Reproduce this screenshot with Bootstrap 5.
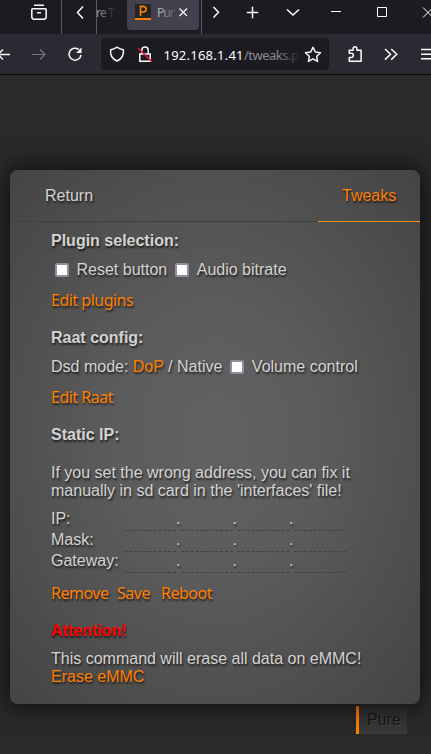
<!DOCTYPE html>
<html lang="en">
<head>
<meta charset="utf-8">
<title>Pure Tweaks</title>
<link rel="stylesheet" href="https://cdn.jsdelivr.net/npm/bootstrap@5.3.0/dist/css/bootstrap.min.css">
<style>
body{background:#2a2a2a;font-family:"Liberation Sans",sans-serif;font-size:16px;line-height:18px;color:#d3d3d3;width:431px;height:754px}
svg{display:block;fill:none;stroke:#fbfbfe;stroke-width:1.5}
.tabstrip{height:34px;background:#1c1b22}
.toolbar{height:41px;background:#2b2a33;border-bottom:1px solid #0c0c0d}
.chrome{font-family:"Noto Sans",sans-serif;font-size:12px;color:#b8b7bd}
.bar-svg{width:431px}
.chrome text{stroke:none;fill:#fbfbfe;font-family:"Noto Sans",sans-serif}
.panel{margin:95px 11px 0 10px;height:534px;border-radius:8px;background:radial-gradient(ellipse farthest-corner at center,#626262 0%,#5c5c5c 35%,#444 100%);box-shadow:0 0 24px 4px rgba(0,0,0,.62);text-shadow:1px 2px 2px rgba(0,0,0,.65);position:relative}
.tabs-row{height:52px}
.tab-return{width:308px;padding:17px 0 0 35px;border-bottom:1px solid #404040}
.tab-tweaks{width:102px;padding:17px 0 0 24px;color:#ff7f00;border-bottom:1px solid #ff9210}
.content{padding:10px 0 0 41px;white-space:nowrap}
.content b{display:block}
.act{font-family:"Noto Sans",sans-serif;font-size:16px;letter-spacing:-.5px;color:#ff7f00}
.or{color:#ff7f00}
.chk{width:14px;height:14px;border:2px solid #8f8f9d;border-radius:2px;background:#fff}
.chk+span{margin-left:7.5px}
.g11{margin-top:11px}.g12{margin-top:12px}.g13{margin-top:13px}.g20{margin-top:20px}.g10{margin-top:10px}.g8{margin-top:8px}
.iprow{height:21px;line-height:21px}
.iplabel{width:73px}
.octet{width:52px;height:21px;border-bottom:1px dashed #404040;transform:translateY(2px)}
.dot{width:4.5px}
.w-remove{width:66px}.w-save{width:44px}
.alert-title{color:red}
.pure{width:51px;height:28px;margin:2px 0 0 356px;border-left:3px solid #ff7f00;color:#151515;padding:5px 0 0 8px;text-shadow:1px 1px 0 #484848;background:linear-gradient(#303030,#3a3a3a)}
</style>
<script src="https://cdn.jsdelivr.net/npm/bootstrap@5.3.0/dist/js/bootstrap.bundle.min.js"></script>
</head>
<body class="m-0 overflow-hidden">
<header class="chrome">
<div class="tabstrip">
<svg class="bar-svg" height="34" viewBox="0 0 431 34">
<defs><linearGradient id="f1"><stop offset="0" stop-color="#a5a4aa"/><stop offset="1" stop-color="#222129"/></linearGradient><linearGradient id="f2"><stop offset="0" stop-color="#bebdc5"/><stop offset="1" stop-color="#55535f"/></linearGradient></defs>
<path d="M61.5 0V34M96.5 0V34M201.5 0V34" stroke="#5b5a61" stroke-width="1"/>
<path d="M34 5.3h10M32.3 8.7h13.4M31.8 9.5v7.3q0 2.4 2.4 2.4h9.6q2.4 0 2.4-2.4V9.5q0-.8-1-.8H32.8q-1 0-1 .8M37 12.7h4"/>
<path d="M83 6.5L77.5 12.5L83 18.5"/>
<text x="96" y="17" font-size="12" textLength="19" style="fill:url(#f1)">re T</text>
<rect x="127" y="-6" width="72" height="36" rx="4" fill="#42414d" stroke="none"/>
<rect x="135" y="4" width="16" height="16" fill="#252525" stroke="none"/><path d="M135 19h16" stroke="#ff8000" stroke-width="2"/>
<path d="M140.5 16V6.4h2.6q3 0 3 2.8t-3 2.8h-2.6" stroke="#ff8000" stroke-width="1.6"/>
<text x="157" y="17" font-size="12.5" textLength="18" style="fill:url(#f2)">Pur</text>
<path d="M179.5 8.5l7.5 7.5M187 8.5l-7.5 7.5" stroke-width="1.2"/>
<path d="M213.5 7l5 5.3-5 5.3M252.5 6.8v11.4M246.8 12.5h11.4M287 9.5l6 5.5 6-5.5"/>
<path d="M331 11.5h10M377.5 7.5h9v9h-9zM423 7.5l10 10M433 7.5l-10 10" stroke-width="1"/>
</svg></div>
<div class="toolbar">
<svg class="bar-svg" height="40" viewBox="0 34 431 40">
<defs><linearGradient id="f3"><stop offset="0" stop-color="#8c8b92"/><stop offset=".62" stop-color="#8c8b92"/><stop offset="1" stop-color="#24232a"/></linearGradient></defs>
<rect x="101" y="38" width="228" height="32" rx="4" fill="#1c1b22" stroke="none"/>
<path d="M-2 54.5H10M3 49.5l-5 5 5 5"/>
<path d="M32 54.5H45M40 49.5l5 5-5 5" stroke="#77767e" stroke-width="1.2"/>
<path d="M78.7 49.4A6 6 0 1 0 81 54.8"/><path d="M81.5 47.5v5.4h-5.4z" fill="#fbfbfe" stroke="none"/>
<path d="M117 47.2q3.2 2.2 6.3 2.5c.7 4-.8 8.8-6.3 11.5c-5.5-2.7-7-7.5-6.3-11.5q3.1-.3 6.3-2.5z" stroke-linejoin="round"/>
<path d="M139.8 54h10.4v7.3h-10.4zM141.8 53.5v-3.3a3.2 3.2 0 0 1 6.4 0v3.3"/><path d="M138.3 48.2L152 61.8" stroke="#e5133d" stroke-width="1.6"/>
<text x="163.5" y="60" font-size="13" textLength="80">192.168.1.41</text>
<text x="244" y="60" font-size="13" textLength="55" style="fill:url(#f3)">/tweaks.p</text>
<path d="M313 47.2l2.3 4.8 5.2.7-3.8 3.6.9 5.1-4.6-2.5-4.6 2.5.9-5.1-3.8-3.6 5.2-.7z" stroke-linejoin="round"/>
<path d="M349.3 57.5v3.8h11.8V50.3h-4.2v-1.6a1.9 1.9 0 0 0-3.8 0v1.6h-3.8v2.9h1.9a2.1 2.1 0 0 1 0 4.3z" stroke-linejoin="round"/>
<path d="M385 49l5.5 5.3-5.5 5.3M391.2 49l5.5 5.3-5.5 5.3M421 49.5h12M421 54.3h12M421 58.8h12"/>
</svg></div>
</header>
<main class="panel">
<nav class="tabs-row d-flex"><div class="tab-return">Return</div><div class="tab-tweaks">Tweaks</div></nav>
<section class="content">
<b>Plugin selection:</b>
<div class="d-flex align-items-center g11"><span class="chk ms-1"></span><span>Reset button</span><span class="chk ms-2"></span><span>Audio bitrate</span></div>
<div class="act g12">Edit plugins</div>
<b class="g20">Raat config:</b>
<div class="d-flex align-items-center g11"><span>Dsd mode: <span class="or">DoP</span> / Native</span><span class="chk ms-2"></span><span>Volume control</span></div>
<div class="act g12">Edit Raat</div>
<b class="g20">Static IP:</b>
<div class="g20">If you set the wrong address, you can fix it<br>manually in sd card in the 'interfaces' file!</div>
<div class="g8">
<div class="iprow d-flex"><span class="iplabel">IP:</span><i class="octet"></i><span class="dot">.</span><i class="octet"></i><span class="dot">.</span><i class="octet"></i><span class="dot">.</span><i class="octet"></i></div>
<div class="iprow d-flex"><span class="iplabel">Mask:</span><i class="octet"></i><span class="dot">.</span><i class="octet"></i><span class="dot">.</span><i class="octet"></i><span class="dot">.</span><i class="octet"></i></div>
<div class="iprow d-flex"><span class="iplabel">Gateway:</span><i class="octet"></i><span class="dot">.</span><i class="octet"></i><span class="dot">.</span><i class="octet"></i><span class="dot">.</span><i class="octet"></i></div>
</div>
<div class="act d-flex g13"><span class="w-remove">Remove</span><span class="w-save">Save</span><span>Reboot</span></div>
<b class="g20 alert-title">Attention!</b>
<div class="g10">This command will erase all data on eMMC!<br><span class="or">Erase eMMC</span></div>
</section>
</main>
<footer class="pure">Pure</footer>
</body>
</html>
